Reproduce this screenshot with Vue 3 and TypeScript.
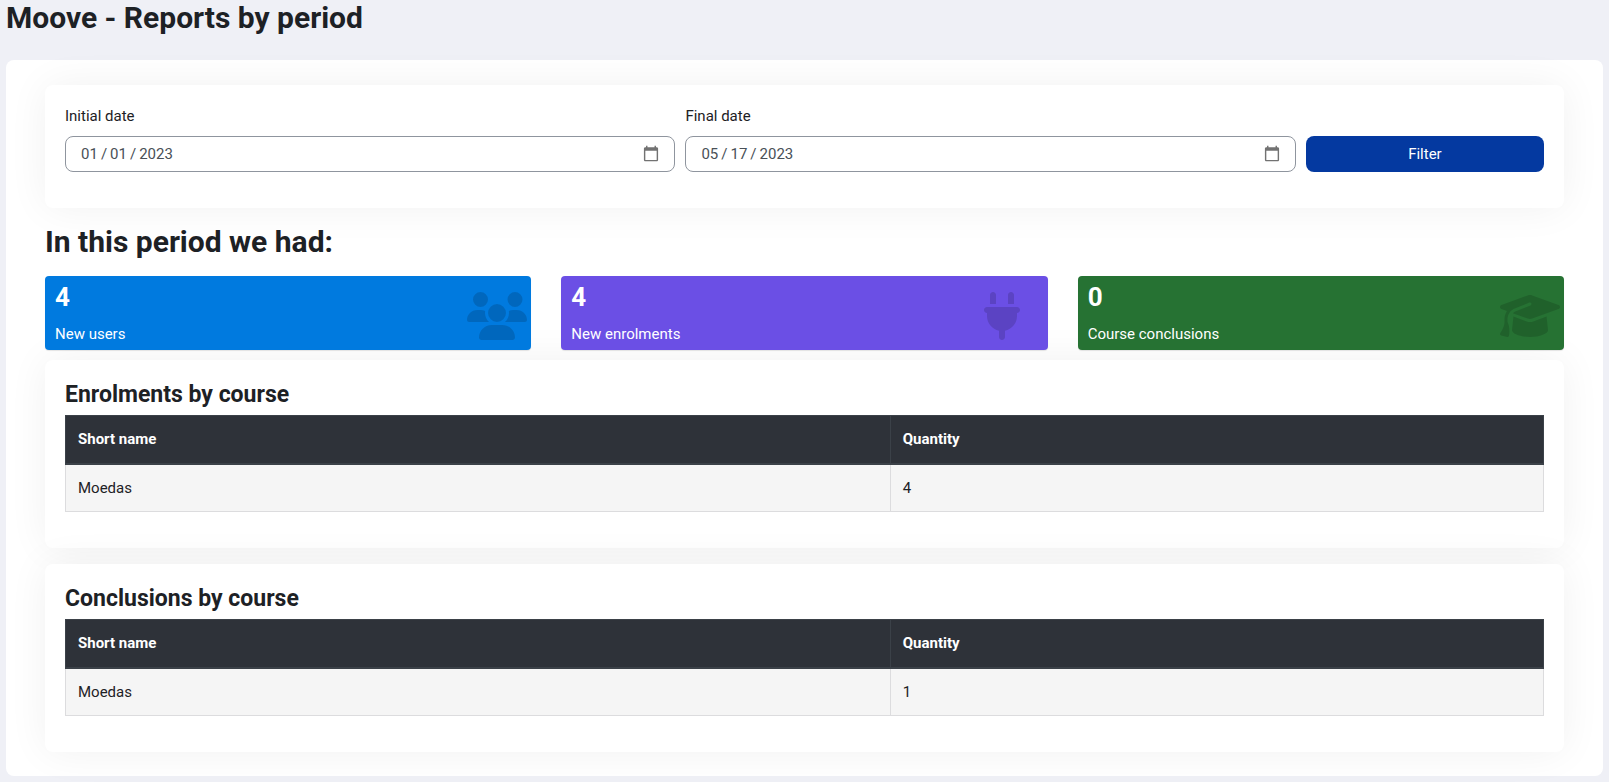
<script setup lang="ts">
import { ref } from 'vue'

interface Tile {
  value: number
  label: string
  tone: string
  viewBox: string
  path: string
}

interface Report {
  title: string
  rows: { name: string; quantity: number }[]
}

const initialDate = ref('2023-01-01')
const finalDate = ref('2023-05-17')

const tiles: Tile[] = [
  {
    value: 4,
    label: 'New users',
    tone: 'blue',
    viewBox: '0 0 640 512',
    path: 'M144 0a80 80 0 1 1 0 160A80 80 0 1 1 144 0zM512 0a80 80 0 1 1 0 160A80 80 0 1 1 512 0zM0 298.7C0 239.8 47.8 192 106.7 192h42.7c15.9 0 31 3.5 44.6 9.7c-1.3 7.2-1.9 14.7-1.9 22.3c0 38.2 16.8 72.5 43.3 96c-.2 0-.4 0-.7 0H21.3C9.6 320 0 310.4 0 298.7zM405.3 320c-.2 0-.4 0-.7 0c26.6-23.5 43.3-57.8 43.3-96c0-7.6-.7-15-1.9-22.3c13.6-6.3 28.7-9.7 44.6-9.7h42.7C592.2 192 640 239.8 640 298.7c0 11.8-9.6 21.3-21.3 21.3H405.3zM224 224a96 96 0 1 1 192 0 96 96 0 1 1 -192 0zM128 485.3C128 411.7 187.7 352 261.3 352H378.7C452.3 352 512 411.7 512 485.3c0 14.7-11.9 26.7-26.7 26.7H154.7c-14.7 0-26.7-11.9-26.7-26.7z',
  },
  {
    value: 4,
    label: 'New enrolments',
    tone: 'purple',
    viewBox: '0 0 384 512',
    path: 'M96 0C78.3 0 64 14.3 64 32v96h64V32c0-17.7-14.3-32-32-32zM288 0c-17.7 0-32 14.3-32 32v96h64V32c0-17.7-14.3-32-32-32zM32 160c-17.7 0-32 14.3-32 32s14.3 32 32 32v32c0 77.4 55 142 128 156.8V480c0 17.7 14.3 32 32 32s32-14.3 32-32V412.8C297 398 352 333.4 352 256V224c17.7 0 32-14.3 32-32s-14.3-32-32-32H32z',
  },
  {
    value: 0,
    label: 'Course conclusions',
    tone: 'green',
    viewBox: '0 0 640 512',
    path: 'M320 32c-8.1 0-16.1 1.4-23.7 4.1L15.8 137.4C6.3 140.9 0 149.9 0 160s6.3 19.1 15.8 22.6l57.9 20.9C57.3 229.3 48 259.8 48 291.9v28.1c0 28.4-10.8 57.7-22.3 80.8c-6.5 13-13.9 25.8-22.5 37.6C0 442.7-.9 448.3 .9 453.4s6 8.9 11.2 10.2l64 16c4.2 1.1 8.7 .3 12.4-2s6.3-6.1 7.1-10.4c8.6-42.8 4.3-81.2-2.1-108.7C90.3 344.3 86 329.8 80 316.5V291.9c0-30.2 10.2-58.7 27.9-81.5c12.9-15.5 29.6-28 49.2-35.7l157-61.7c8.2-3.2 17.5 .8 20.7 9s-.8 17.5-9 20.7l-157 61.7c-12.4 4.9-23.3 12.4-32.2 21.6l159.6 57.6c7.6 2.7 15.6 4.1 23.7 4.1s16.1-1.4 23.7-4.1L624.2 182.6c9.5-3.4 15.8-12.5 15.8-22.6s-6.3-19.1-15.8-22.6L343.7 36.1C336.1 33.4 328.1 32 320 32zM128 408c0 35.3 86 72 192 72s192-36.7 192-72L496.7 262.6 354.5 314c-11.1 4-22.8 6-34.5 6s-23.5-2-34.5-6L143.3 262.6 128 408z',
  },
]

const reports: Report[] = [
  { title: 'Enrolments by course', rows: [{ name: 'Moedas', quantity: 4 }] },
  { title: 'Conclusions by course', rows: [{ name: 'Moedas', quantity: 1 }] },
]
</script>

<template>
  <div class="page">
    <h1 class="page-title">Moove - Reports by period</h1>
    <main class="panel">
      <form class="card filter" @submit.prevent>
        <div class="field">
          <label for="initial-date">Initial date</label>
          <input id="initial-date" v-model="initialDate" class="date" type="date" />
        </div>
        <div class="field">
          <label for="final-date">Final date</label>
          <input id="final-date" v-model="finalDate" class="date" type="date" />
        </div>
        <button class="submit" type="submit">Filter</button>
      </form>

      <h2 class="section-title">In this period we had:</h2>

      <div class="tiles">
        <div v-for="tile in tiles" :key="tile.label" class="tile" :class="tile.tone">
          <div class="tile-text">
            <strong class="tile-value">{{ tile.value }}</strong>
            <span class="tile-label">{{ tile.label }}</span>
          </div>
          <div class="tile-icon">
            <svg :viewBox="tile.viewBox" aria-hidden="true"><path :d="tile.path" /></svg>
          </div>
        </div>
      </div>

      <section v-for="report in reports" :key="report.title" class="card report">
        <h3 class="report-title">{{ report.title }}</h3>
        <table class="table">
          <thead>
            <tr>
              <th class="name" scope="col">Short name</th>
              <th scope="col">Quantity</th>
            </tr>
          </thead>
          <tbody>
            <tr v-for="row in report.rows" :key="row.name">
              <td>{{ row.name }}</td>
              <td>{{ row.quantity }}</td>
            </tr>
          </tbody>
        </table>
      </section>
    </main>
  </div>
</template>

<style>
body {
  background: #eff0f6;
}
</style>

<style scoped>
.page,
.page * {
  box-sizing: border-box;
}

.page {
  padding: 0 6px 6px;
  color: #1d2125;
  font-family: Roboto, "Liberation Sans", sans-serif;
  font-size: 15px;
  line-height: 23px;
}

h1,
h2,
h3 {
  margin: 0;
  font-weight: 700;
}

.page-title,
.section-title {
  font-size: 30px;
  line-height: 36px;
}

.page-title {
  margin-bottom: 24px;
}

.panel {
  padding: 25px 39px 24px;
  border-radius: 8px;
  background: #fff;
}

.card {
  padding: 20px;
  border-radius: 8px;
  background: #fff;
  box-shadow: 0 0 40px rgba(0, 16, 24, 0.06);
}

.filter {
  display: grid;
  grid-template-columns: repeat(12, minmax(0, 1fr));
  gap: 10px;
  align-items: end;
  padding-bottom: 36px;
}

.field {
  display: flex;
  grid-column: span 5;
  flex-direction: column;
  gap: 8px;
}

.date {
  width: 100%;
  height: 36px;
  padding: 0 14px;
  border: 1px solid #8f959e;
  border-radius: 8px;
  background: #fff;
  color: #495057;
  font: inherit;
}

.date::-webkit-datetime-edit-text {
  padding: 0 2px;
}

.date::-webkit-calendar-picker-indicator {
  width: 18px;
  height: 18px;
  padding: 0;
  opacity: 0.55;
}

.submit {
  grid-column: span 2;
  height: 36px;
  border: 0;
  border-radius: 8px;
  background: #0439a0;
  color: #fff;
  font: inherit;
}

.section-title {
  margin: 16px 0;
}

.tiles {
  display: grid;
  grid-template-columns: repeat(3, minmax(0, 1fr));
  gap: 30px;
  margin-bottom: 10px;
}

.tile {
  display: flex;
  justify-content: space-between;
  padding: 6px 4px 4px 10px;
  border-radius: 4px;
  box-shadow: 0 1px 1px rgba(0, 0, 0, 0.1);
  color: #fff;
}

.tile-text {
  display: flex;
  flex-direction: column;
  gap: 11px;
}

.tile-value {
  font-size: 26px;
  line-height: 30px;
}

.tile-icon {
  width: 60px;
  padding-top: 10px;
}

.tile-icon svg {
  display: block;
  height: 48px;
  fill: rgba(0, 0, 0, 0.15);
}

.blue {
  background: #007adf;
}

.purple {
  background: #6b4fe5;
}

.green {
  background: #267233;
}

.report {
  padding-bottom: 36px;
}

.report + .report {
  margin-top: 16px;
}

.report-title {
  margin-bottom: 5px;
  font-size: 23px;
  line-height: 30px;
}

.table {
  width: 100%;
  border-collapse: collapse;
}

.table th,
.table td {
  padding: 12px;
  border: 1px solid #dcdcde;
  text-align: left;
}

.table th {
  border-color: #3b4148;
  border-bottom-width: 2px;
  background: #2e3239;
  color: #fff;
  font-weight: 700;
}

.table .name {
  width: 55.8%;
}

.table td {
  padding-bottom: 11px;
  background: #f5f5f5;
}
</style>
